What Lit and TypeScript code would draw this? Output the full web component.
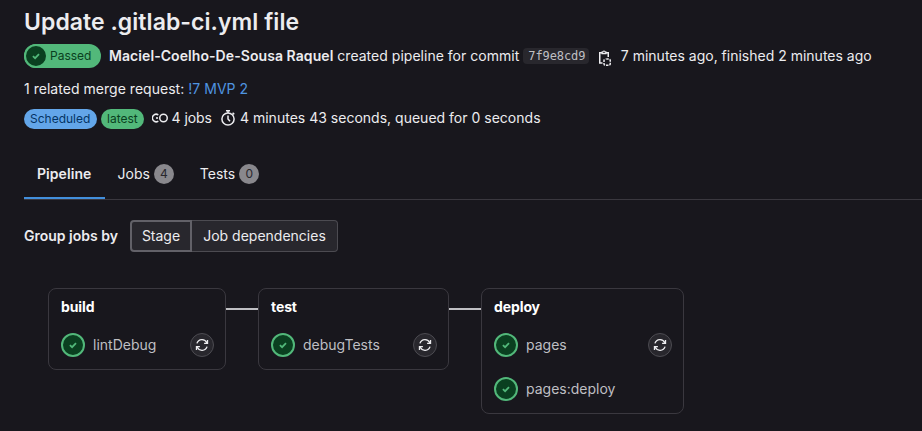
import { LitElement, html, css, svg } from "lit";
import { customElement, property } from "lit/decorators.js";

const base = css`
  :host { font-family: Inter, "Noto Sans", sans-serif; font-size: 14px; line-height: 20px; color: #ececef; }
  * { box-sizing: border-box; }
  svg { display: block; flex: none; }
`;

const retryIcon = html`<svg width="14" height="14" viewBox="0 0 16 16" fill="none" stroke="#ececef" stroke-width="1.5">
  <path d="M13.6 5.6A6.1 6.1 0 0 0 2.2 6.2M2.4 10.4a6.1 6.1 0 0 0 11.4-.6"/>
  <path d="M14.3 2.2v3.9h-3.9M1.7 13.8V9.9h3.9"/>
</svg>`;

const copyIcon = html`<svg class="copy" width="16" height="16" viewBox="0 0 16 16" fill="none" stroke="#ececef" stroke-width="1.5">
  <path d="M5 2.75H2.75v10.2H5.5M9 2.75h2.25V7"/>
  <path d="M5 3.7V2.2h.8a1.2 1.2 0 0 1 2.4 0H9v1.5z" stroke-width="1.2"/>
  <rect x="7" y="9" width="6.25" height="6.25" rx="1.6" stroke-dasharray="2.5 .9" stroke-dashoffset="-.6"/>
</svg>`;

const jobsIcon = html`<svg width="16" height="16" viewBox="0 0 16 16" fill="none" stroke="#ececef" stroke-width="1.5">
  <circle cx="11.5" cy="8" r="3.75"/>
  <path d="M6.3 4.9A3.75 3.75 0 1 0 6.3 11.1"/>
  <circle cx="5" cy="8" r="1.1" fill="#ececef" stroke="none"/>
</svg>`;

const timerIcon = html`<svg width="16" height="16" viewBox="0 0 16 16" fill="none" stroke="#ececef" stroke-width="1.5">
  <circle cx="8" cy="9" r="6.1"/>
  <path d="M8 5.4V9l2 2.2M6 .8h4M8 .8V3M12.6 2.8l1.6 1.6"/>
</svg>`;

const check = svg`<path d="M4.9 8.1 7.1 10.2 11 6.2"/>`;

@customElement("status-icon")
class StatusIcon extends LitElement {
  static styles = [base, css`
    :host { display: flex; align-items: center; justify-content: center; flex: none; width: 24px; height: 24px; border-radius: 50%; background: #0a4020; border: 2px solid #52b87a; box-sizing: border-box; }
  `];
  render() {
    return html`<svg width="16" height="16" viewBox="0 0 16 16" fill="none" stroke="#52b87a" stroke-width="1.8">${check}</svg>`;
  }
}

interface Job { name: string; retry: boolean; }

@customElement("stage-card")
class StageCard extends LitElement {
  @property() name = "";
  @property({ attribute: false }) jobs: Job[] = [];
  static styles = [base, css`
    :host { display: block; border: 1px solid #3a383f; border-radius: 8px; box-sizing: border-box; padding: 8px 11px 12px 12px; background: #18171d; }
    .title { font-weight: 700; color: #fff; height: 20px; letter-spacing: -0.1px; margin-bottom: 16px; }
    .job { display: flex; align-items: center; height: 24px; color: #bfbfc3; }
    .job + .job { margin-top: 20px; }
    .label { flex: 1; margin-left: 8px; }
    .retry { width: 24px; height: 24px; border-radius: 50%; border: 1px solid #4c4b51; background: #28272d; display: flex; align-items: center; justify-content: center; }
  `];
  render() {
    return html`<div class="title">${this.name}</div>
      ${this.jobs.map(j => html`<div class="job"><status-icon></status-icon><span class="label">${j.name}</span>${j.retry ? html`<span class="retry">${retryIcon}</span>` : ""}</div>`)}`;
  }
}

@customElement("app-root")
class AppRoot extends LitElement {
  static styles = [base, css`
    :host { display: block; width: 922px; height: 431px; background: #18171d; padding-left: 24px; overflow: hidden; white-space: nowrap; }
    h1 { margin: 0; padding-top: 8px; height: 44px; font-size: 23px; line-height: 28px; font-weight: 600; letter-spacing: 0.05px; }
    .row { display: flex; align-items: center; }
    .summary { height: 24px; }
    .passed { width: 77px; height: 24px; border-radius: 12px; background: #52b87a; color: #0a4020; display: flex; align-items: center; margin-right: 8px; font-size: 12px; }
    .passed span { margin-left: 2px; }
    .author { font-weight: 600; letter-spacing: 0.07px; }
    .created { letter-spacing: 0.02px; }
    .sha { margin: 0 8px 0 4px; padding: 0 5px; width: 66px; height: 16px; border-radius: 4px; background: #28272d; color: #bfbfc3; font: 12px/16px "DejaVu Sans Mono", monospace; letter-spacing: -0.1px; }
    .copy { margin: 4px 7.5px 0 0; }
    .related { margin-top: 11px; height: 20px; letter-spacing: 0.03px; }
    .link { color: #4f94e0; }
    .meta { height: 20px; margin-top: 10px; }
    .tag { height: 20px; border-radius: 10px; font-size: 12px; padding: 0 6px; margin-right: 4px; }
    .blue { background: #63a6e9; color: #033464; width: 73px; }
    .green { background: #52b87a; color: #0a4020; width: 43px; margin-right: 8px; }
    .meta svg { margin: -2px 4px 0 0; }
    .count { margin: -2px 8px 0 -0.5px; letter-spacing: -0.05px; }
    .duration { margin-top: -2px; letter-spacing: 0.01px; }
    .tabs { display: flex; height: 51px; margin-top: 20px; border-bottom: 1px solid #3a383f; }
    .tab { display: flex; height: 50px; align-items: center; padding: 0 13.5px 0 12.5px; }
    .active { font-weight: 600; width: 81px; padding: 2px 12px 0 13px; border-bottom: 2px solid #428fdc; letter-spacing: 0.06px; }
    .pill { width: 20px; height: 20px; border-radius: 10px; background: #89888d; color: #28272d; font-size: 12px; text-align: center; margin-left: 4px; }
    .group { margin-top: 20px; height: 32px; font-weight: 600; }
    .caption { width: 106px; }
    .buttons { display: flex; font-weight: 400; }
    .btn { height: 32px; line-height: 30px; text-align: center; background: #28272d; border: 1px solid #4c4b51; width: 146px; border-left: 0; border-radius: 0 4px 4px 0; }
    .selected { width: 62px; border: 2px solid #626168; line-height: 28px; border-radius: 4px 0 0 4px; }
    .graph { display: flex; align-items: flex-start; margin: 36px 0 0 24px; }
    .connector { height: 2px; width: 32px; margin-top: 20px; background: #bfbfc3; }
    .build { width: 178px; }
    .test { width: 191px; }
    .deploy { width: 203px; }
  `];
  render() {
    return html`
      <h1>Update .gitlab-ci.yml file</h1>
      <div class="row summary">
        <span class="passed"><status-icon></status-icon><span>Passed</span></span>
        <span class="author">Maciel-Coelho-De-Sousa Raquel</span><span class="created">&nbsp;created pipeline for commit</span>
        <span class="sha">7f9e8cd9</span>${copyIcon}
        <span>7 minutes ago, finished 2 minutes ago</span>
      </div>
      <div class="related">1 related merge request: <span class="link">!7 MVP 2</span></div>
      <div class="row meta">
        <span class="tag blue">Scheduled</span><span class="tag green">latest</span>
        ${jobsIcon}<span class="count">4 jobs</span>
        ${timerIcon}<span class="duration">4 minutes 43 seconds, queued for 0 seconds</span>
      </div>
      <div class="tabs">
        <div class="tab active">Pipeline</div>
        <div class="tab">Jobs<span class="pill">4</span></div>
        <div class="tab">Tests<span class="pill">0</span></div>
      </div>
      <div class="row group"><span class="caption">Group jobs by</span>
        <div class="buttons"><div class="btn selected">Stage</div><div class="btn">Job dependencies</div></div>
      </div>
      <div class="graph">
        <stage-card class="build" name="build" .jobs=${[{ name: "lintDebug", retry: true }]}></stage-card>
        <div class="connector"></div>
        <stage-card class="test" name="test" .jobs=${[{ name: "debugTests", retry: true }]}></stage-card>
        <div class="connector"></div>
        <stage-card class="deploy" name="deploy" .jobs=${[{ name: "pages", retry: true }, { name: "pages:deploy", retry: false }]}></stage-card>
      </div>`;
  }
}
